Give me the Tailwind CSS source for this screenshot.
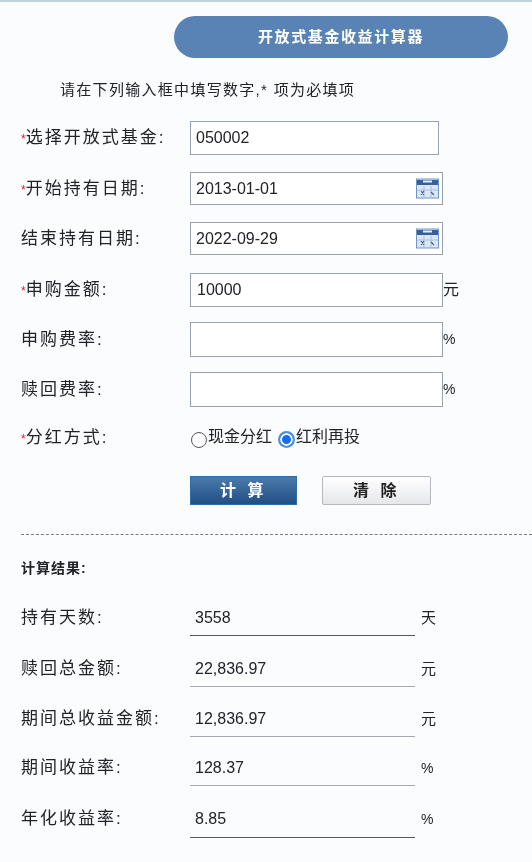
<!DOCTYPE html>
<html lang="zh-CN">
<head>
  <meta charset="UTF-8">
  <title>开放式基金收益计算器</title>
  <script src="https://cdn.jsdelivr.net/npm/@tailwindcss/browser@4"></script>
</head>
<body class="bg-[#fbfcfe] font-['Liberation_Sans','Noto_Sans_CJK_SC',sans-serif] text-[#222228] overflow-hidden">
  <div class="w-[532px] h-[862px] border-t-2 border-[#bcd3de] overflow-hidden blur-[0.5px]">

    <!-- title -->
    <div class="ml-[174px] mr-[24px] mt-[14px] h-[42px] rounded-[21px] bg-[#5a83b5] flex items-center justify-center text-white text-[15px] font-bold tracking-[1.6px]">
      开放式基金收益计算器
    </div>
    <p class="ml-[60px] mt-[22px] text-[15px] leading-[20px] tracking-[1.3px]">请在下列输入框中填写数字,* 项为必填项</p>

    <!-- form -->
    <form class="mt-[21px]">
      <div class="flex items-center h-[34px]">
        <label class="w-[190px] pl-[21px] text-[17px] tracking-[2px]"><span class="text-[#c0282c] text-[12px] tracking-normal">*</span>选择开放式基金:</label>
        <input type="text" value="050002" class="w-[249px] h-[34px] bg-white border border-[#9aa3ad] pl-[5px] text-[16px] outline-none">
      </div>

      <div class="flex items-center h-[33px] mt-[17px]">
        <label class="w-[190px] pl-[21px] text-[17px] tracking-[2px]"><span class="text-[#c0282c] text-[12px] tracking-normal">*</span>开始持有日期:</label>
        <div class="w-[253px] h-[33px] bg-white border border-[#9aa3ad] flex items-center justify-between pl-[5px] pr-[3px] text-[16px]">
          <span>2013-01-01</span>
          <svg width="23" height="21" viewBox="0 0 23 21"><rect x="0.5" y="1" width="22" height="19" fill="#dbe7f4" stroke="#6f93c4"/><rect x="1" y="2" width="21" height="5" fill="#34609f"/><rect x="7" y="2.5" width="9" height="2" fill="#e8f0f8"/><path d="M1 12h21M8 8v11M15 8v11" stroke="#a9bfdc"/><path d="M5 13l3 4M8 13l-3 4M15 14l3 3" stroke="#3d6199" stroke-width="1.2"/></svg>
        </div>
      </div>

      <div class="flex items-center h-[33px] mt-[17px]">
        <label class="w-[190px] pl-[21px] text-[17px] tracking-[2px]">结束持有日期:</label>
        <div class="w-[253px] h-[33px] bg-white border border-[#9aa3ad] flex items-center justify-between pl-[5px] pr-[3px] text-[16px]">
          <span>2022-09-29</span>
          <svg width="23" height="21" viewBox="0 0 23 21"><rect x="0.5" y="1" width="22" height="19" fill="#dbe7f4" stroke="#6f93c4"/><rect x="1" y="2" width="21" height="5" fill="#34609f"/><rect x="7" y="2.5" width="9" height="2" fill="#e8f0f8"/><path d="M1 12h21M8 8v11M15 8v11" stroke="#a9bfdc"/><path d="M5 13l3 4M8 13l-3 4M15 14l3 3" stroke="#3d6199" stroke-width="1.2"/></svg>
        </div>
      </div>

      <div class="flex items-center h-[34px] mt-[18px]">
        <label class="w-[190px] pl-[21px] text-[17px] tracking-[2px]"><span class="text-[#c0282c] text-[12px] tracking-normal">*</span>申购金额:</label>
        <input type="text" value="10000" class="w-[253px] h-[34px] bg-white border border-[#9aa3ad] pl-[6px] text-[16px] outline-none">
        <span class="text-[16px]">元</span>
      </div>

      <div class="flex items-center h-[35px] mt-[15px]">
        <label class="w-[190px] pl-[21px] text-[17px] tracking-[2px]">申购费率:</label>
        <input type="text" class="w-[253px] h-[35px] bg-white border border-[#9aa3ad] outline-none">
        <span class="text-[14px]">%</span>
      </div>

      <div class="flex items-center h-[35px] mt-[15px]">
        <label class="w-[190px] pl-[21px] text-[17px] tracking-[2px]">赎回费率:</label>
        <input type="text" class="w-[253px] h-[35px] bg-white border border-[#9aa3ad] outline-none">
        <span class="text-[14px]">%</span>
      </div>

      <div class="flex items-center h-[24px] mt-[19px]">
        <label class="w-[190px] pl-[21px] text-[17px] tracking-[2px]"><span class="text-[#c0282c] text-[12px] tracking-normal">*</span>分红方式:</label>
        <span class="w-[16px] h-[16px] ml-[1px] mt-[3px] rounded-full border border-[#55555c] bg-white"></span>
        <span class="text-[16px] -mt-[3px] ml-[1px] mr-[6px]">现金分红</span>
        <span class="w-[17px] h-[17px] mt-[2px] rounded-full border-2 border-[#4f8fd8] bg-[#0f6ff0] ring-2 ring-inset ring-white"></span>
        <span class="text-[16px] -mt-[3px] ml-[1px]">红利再投</span>
      </div>

      <div class="flex h-[29px] ml-[190px] mt-[26px] gap-[25px]">
        <button type="button" class="w-[107px] bg-gradient-to-b from-[#4b7bab] to-[#214f86] border border-[#2d6ea8] text-white text-[16px] font-bold tracking-[3.5px]">计 算</button>
        <button type="button" class="w-[109px] bg-gradient-to-b from-white to-[#e6e7ea] border border-[#b4b8bf] rounded-[2px] text-[#222] text-[16px] font-bold tracking-[3.5px]">清 除</button>
      </div>
    </form>

    <div class="border-t border-dashed border-[#777c84] ml-[21px] mt-[29px]"></div>

    <!-- results -->
    <p class="ml-[21px] mt-[23px] text-[14px] leading-[20px] font-bold tracking-[1px]">计算结果:</p>

    <div class="mt-[25px]">
      <div class="flex h-[33px]">
        <span class="w-[190px] pl-[21px] text-[17px] tracking-[2px] leading-[30px]">持有天数:</span>
        <span class="w-[225px] pl-[5px] text-[16px] leading-[30px] border-b border-[#55595f]">3558</span>
        <span class="ml-[6px] text-[15px] leading-[30px]">天</span>
      </div>
      <div class="flex h-[33px] mt-[18px]">
        <span class="w-[190px] pl-[21px] text-[17px] tracking-[2px] leading-[30px]">赎回总金额:</span>
        <span class="w-[225px] pl-[5px] text-[16px] leading-[30px] border-b border-[#a3a9b0]">22,836.97</span>
        <span class="ml-[6px] text-[15px] leading-[30px]">元</span>
      </div>
      <div class="flex h-[33px] mt-[17px]">
        <span class="w-[190px] pl-[21px] text-[17px] tracking-[2px] leading-[30px]">期间总收益金额:</span>
        <span class="w-[225px] pl-[5px] text-[16px] leading-[30px] border-b border-[#a3a9b0]">12,836.97</span>
        <span class="ml-[6px] text-[15px] leading-[30px]">元</span>
      </div>
      <div class="flex h-[33px] mt-[16px]">
        <span class="w-[190px] pl-[21px] text-[17px] tracking-[2px] leading-[30px]">期间收益率:</span>
        <span class="w-[225px] pl-[5px] text-[16px] leading-[30px] border-b border-[#a3a9b0]">128.37</span>
        <span class="ml-[6px] text-[14px] leading-[30px]">%</span>
      </div>
      <div class="flex h-[34px] mt-[18px]">
        <span class="w-[190px] pl-[21px] text-[17px] tracking-[2px] leading-[30px]">年化收益率:</span>
        <span class="w-[225px] pl-[5px] text-[16px] leading-[30px] border-b border-[#55595f]">8.85</span>
        <span class="ml-[6px] text-[14px] leading-[30px]">%</span>
      </div>
    </div>
  </div>
</body>
</html>
